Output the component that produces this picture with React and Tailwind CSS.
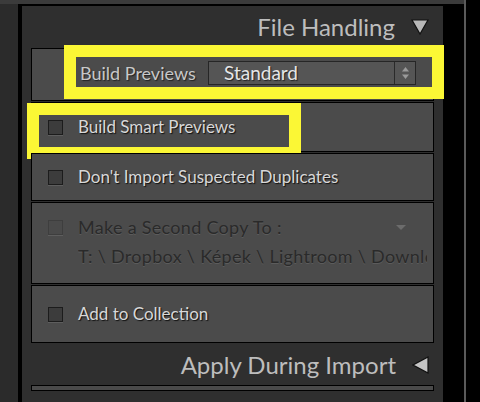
import React from "react";

const font = { fontFamily: "Lato, 'Open Sans', sans-serif" };

// Small square checkbox as Lightroom draws it.
const Box = ({ dim }) => (
  <div
    className={`w-[15px] h-[15px] shrink-0 border ${
      dim ? "border-[#3e3e3e] bg-[#4a4a4a]" : "border-[#1c1c1c] bg-[#3c3c3c]"
    } shadow-[0_1px_0_#5e5e5e]`}
  />
);

const Row = ({ children, className = "" }) => (
  <div className={`relative border border-black bg-[#4b4b4b] ${className}`}>{children}</div>
);

const Label = ({ children }) => (
  <span className="text-[17px] text-[#d8d8d8] [text-shadow:1px_1px_1px_#111] whitespace-nowrap">
    {children}
  </span>
);

export default function App() {
  return (
    <div className="w-[480px] h-[402px] bg-black flex overflow-hidden" style={font}>
      <div className="w-[464px] flex flex-col">
        {/* top band */}
        <div className="h-[4px] bg-[#3b3b3b]" />
        <div className="flex flex-1">
          <div className="w-[18px] bg-[#2b2b2b]" />
          <div className="w-[4px] bg-black" />
          {/* panel */}
          <div className="w-[421px] bg-[#2f2f2f] border-t-2 border-black flex flex-col">
            {/* header */}
            <div className="h-[42px] flex items-center justify-end pr-[14px] gap-[16px]">
              <span className="text-[24px] text-[#bdbdbd]">File Handling</span>
              <svg width="18" height="16" viewBox="0 0 18 16">
                <path d="M1 1 H17 L9 15 Z" fill="#b8b8b8" stroke="#111" strokeWidth="1.2" />
              </svg>
            </div>

            <div className="mx-[9px] flex flex-col gap-[1px]">
              {/* Build Previews */}
              <Row className="h-[53px]">
                <div className="absolute left-[45px] top-[9px] w-[367px] h-[30px] flex items-center pl-[3px]">
                  <span className="text-[18px] text-[#c8c8c8] [text-shadow:1px_1px_1px_#222] w-[128px] whitespace-nowrap">
                    Build Previews
                  </span>
                  <div className="w-[208px] h-[24px] flex border border-[#262626] bg-[#555555]">
                    <span className="flex-1 pl-[15px] text-[19px] leading-[22px] text-[#e6e6e6] [text-shadow:1px_1px_1px_#222]">
                      Standard
                    </span>
                    <div className="w-[21px] border-l border-[#2a2a2a] flex items-center justify-center">
                      <svg width="9" height="14" viewBox="0 0 9 14">
                        <path d="M4.5 1 L8 5.5 H1 Z" fill="#9a9a9a" />
                        <path d="M4.5 13 L8 8.5 H1 Z" fill="#9a9a9a" />
                      </svg>
                    </div>
                  </div>
                </div>
                <div className="absolute left-[32px] top-[-4px] w-[380px] h-[54px] border-[12px] border-[#fbf735]" />
              </Row>

              {/* Build Smart Previews */}
              <Row className="h-[50px] flex items-center pl-[16px] gap-[15px]">
                <Box />
                <Label>Build Smart Previews</Label>
                <div className="absolute left-[-5px] top-[0px] w-[274px] h-[56px] border-[12px] border-[#fbf735]" />
              </Row>

              {/* Don't Import */}
              <Row className="h-[48px] flex items-center pl-[16px] gap-[15px]">
                <Box />
                <Label>Don't Import Suspected Duplicates</Label>
              </Row>

              {/* Second copy */}
              <Row className="h-[82px] pl-[16px] pt-[11px] pr-[6px]">
                <div className="flex items-center gap-[15px]">
                  <Box dim />
                  <span className="flex-1 text-[18px] tracking-[0.3px] text-[#2a2a2a] [text-shadow:0_1px_0_#5c5c5c]">
                    Make a Second Copy To :
                  </span>
                  <svg width="12" height="7" viewBox="0 0 12 7" className="mr-[20px]">
                    <path d="M1 1 H11 L6 6 Z" fill="#6c6c6c" />
                  </svg>
                </div>
                <div className="ml-[30px] mt-[2px] overflow-hidden whitespace-nowrap text-[18px] tracking-[0.3px] text-[#2a2a2a] [text-shadow:0_1px_0_#5c5c5c]">
                  T: \ Dropbox \ Képek \ Lightroom \ Downloads
                </div>
              </Row>

              {/* Add to Collection */}
              <Row className="h-[58px] flex items-center pl-[16px] gap-[15px]">
                <Box />
                <Label>Add to Collection</Label>
              </Row>
            </div>

            {/* Apply During Import header */}
            <div className="h-[42px] flex items-center justify-end pr-[14px] gap-[16px] pt-[2px]">
              <span className="text-[24px] text-[#bdbdbd]">Apply During Import</span>
              <svg width="17" height="18" viewBox="0 0 17 18">
                <path d="M16 1 V17 L1 9 Z" fill="#c4c4c4" stroke="#111" strokeWidth="1.2" />
              </svg>
            </div>
            <div className="mx-[9px] h-[6px] border border-black bg-[#4a4a4a]" />
          </div>
          <div className="w-[21px] bg-black" />
        </div>
      </div>
      <div className="w-[2px] bg-[#5a5a5a]" />
      <div className="flex-1 bg-black" />
    </div>
  );
}
